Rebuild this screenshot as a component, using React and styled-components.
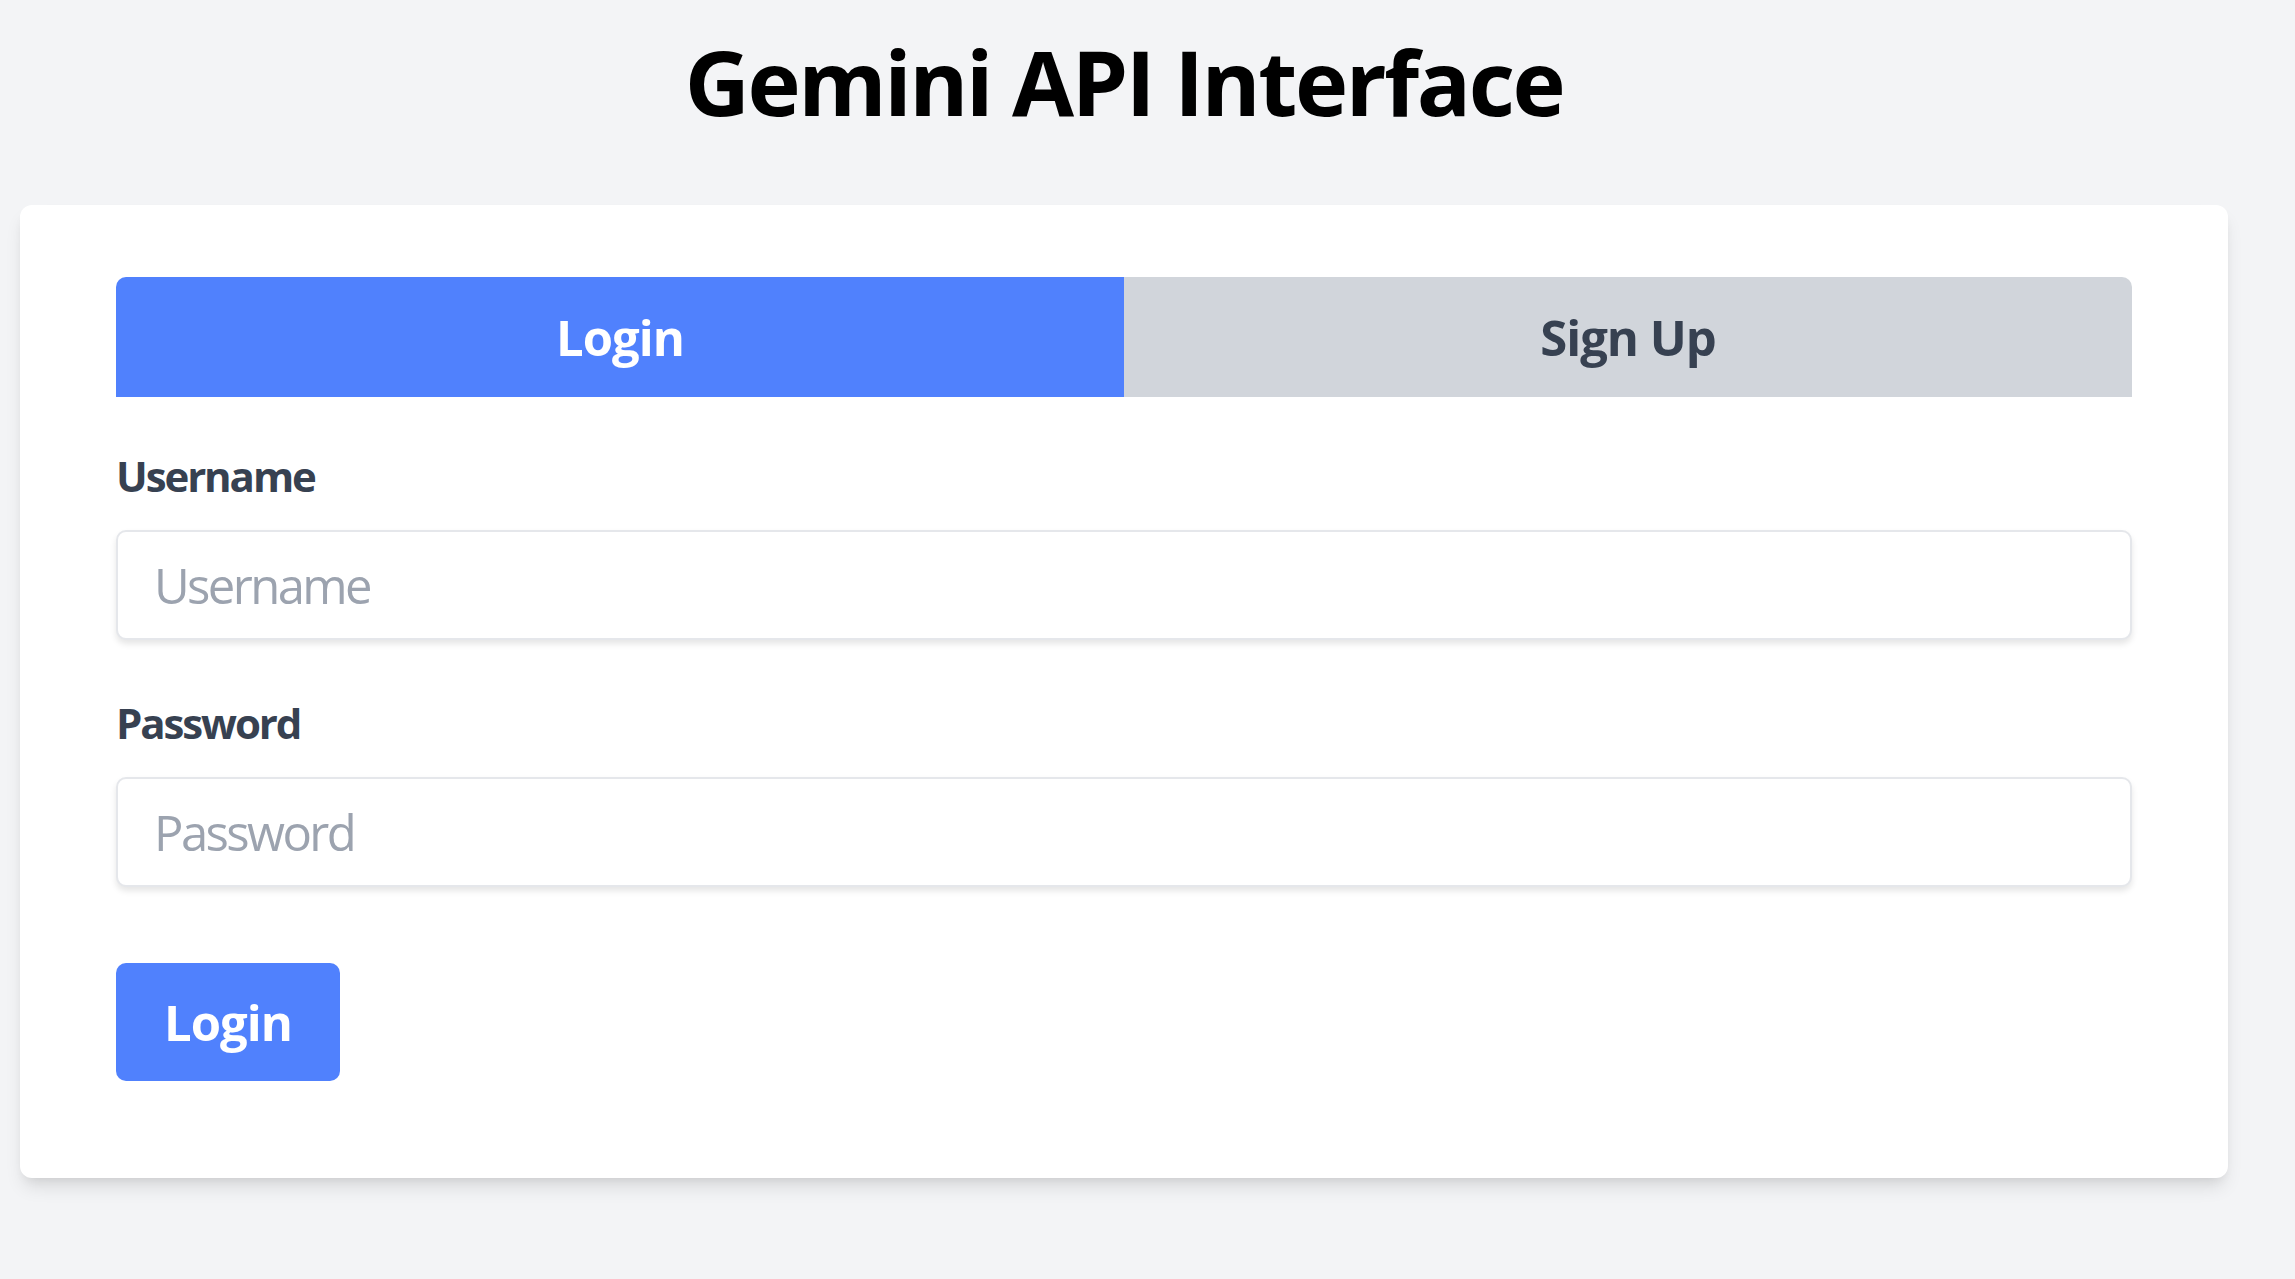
import React, { useState } from "react";
import styled, { createGlobalStyle } from "styled-components";

const GlobalStyle = createGlobalStyle`
  html, body {
    margin: 0;
    padding: 0;
    background: #f3f4f6;
  }
  body {
    font-family: "Open Sans", "Noto Sans", sans-serif;
  }
  * {
    box-sizing: border-box;
  }
`;

const Page = styled.div`
  width: 2248px;
  min-height: 1279px;
  padding: 27px 20px 0;
  display: flex;
  flex-direction: column;
  align-items: stretch;
`;

const Title = styled.h1`
  margin: 0 0 70px;
  text-align: center;
  font-size: 90px;
  line-height: 108px;
  font-weight: 700;
  letter-spacing: -2.4px;
  color: #000;
`;

const Card = styled.div`
  background: #fff;
  border-radius: 12px;
  padding: 72px 96px 97px;
  box-shadow: 0 12px 18px -3px rgba(0, 0, 0, 0.1),
    0 6px 12px -6px rgba(0, 0, 0, 0.1);
`;

const Tabs = styled.div`
  display: grid;
  grid-template-columns: 1fr 1fr;
  border-radius: 10px 10px 0 0;
  overflow: hidden;
  margin-bottom: 49px;
`;

const Tab = styled.button`
  height: 120px;
  border: none;
  font-family: inherit;
  font-size: 49px;
  font-weight: 700;
  letter-spacing: -1px;
  cursor: pointer;
  background: ${(p) => (p.$active ? "#5081fd" : "#d1d5db")};
  color: ${(p) => (p.$active ? "#fff" : "#374151")};
`;

const Field = styled.div`
  display: flex;
  flex-direction: column;
  margin-bottom: ${(p) => p.$gap}px;
`;

const Label = styled.label`
  font-size: 42px;
  line-height: 60px;
  font-weight: 700;
  letter-spacing: -2.1px;
  color: #374151;
  margin-bottom: 24px;
`;

const Input = styled.input`
  height: 110px;
  padding: 0 36px;
  border: 2px solid #e5e7eb;
  border-radius: 10px;
  box-shadow: 0 4px 6px rgba(0, 0, 0, 0.1);
  font-family: inherit;
  font-size: 49px;
  letter-spacing: -2.6px;
  color: #374151;
  outline: none;
  &::placeholder {
    color: #9ca3af;
  }
`;

const Submit = styled.button`
  align-self: flex-start;
  height: 118px;
  padding: 0 48px;
  border: none;
  border-radius: 10px;
  background: #5081fd;
  color: #fff;
  font-family: inherit;
  font-size: 49px;
  font-weight: 700;
  letter-spacing: -1px;
  cursor: pointer;
`;

const Form = styled.form`
  display: flex;
  flex-direction: column;
`;

export default function App() {
  const [mode, setMode] = useState("login");
  return (
    <>
      <GlobalStyle />
      <Page>
        <Title>Gemini API Interface</Title>
        <Card>
          <Tabs>
            <Tab $active={mode === "login"} onClick={() => setMode("login")}>
              Login
            </Tab>
            <Tab $active={mode === "signup"} onClick={() => setMode("signup")}>
              Sign Up
            </Tab>
          </Tabs>
          <Form onSubmit={(e) => e.preventDefault()}>
            <Field $gap={53}>
              <Label>Username</Label>
              <Input placeholder="Username" />
            </Field>
            <Field $gap={76}>
              <Label>Password</Label>
              <Input type="password" placeholder="Password" />
            </Field>
            <Submit type="submit">{mode === "login" ? "Login" : "Sign Up"}</Submit>
          </Form>
        </Card>
      </Page>
    </>
  );
}
